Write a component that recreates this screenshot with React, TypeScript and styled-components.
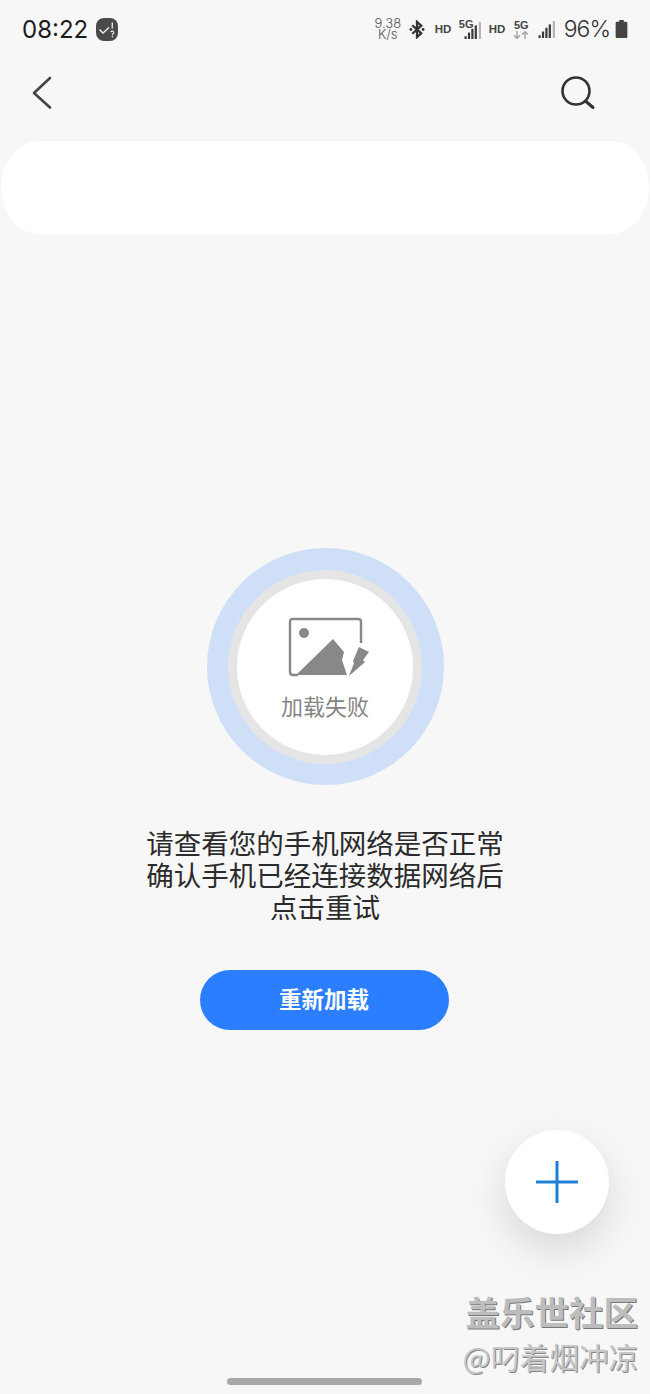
import React from 'react';
import styled, { createGlobalStyle } from 'styled-components';

const CJK = `"Noto Sans CJK SC", "Noto Sans", sans-serif`;

const Signal: React.FC<{ width: number; height: number }> = ({ width, height }) => {
  const heights = [0.16, 0.38, 0.6, 0.8];
  return (
    <svg width={width} height={height} viewBox="0 0 20 20">
      {heights.map((h, i) => (
        <rect key={i} x={i * 4} y={20 - h * 20} width="2.6" height={h * 20} fill="#3a3a3a" />
      ))}
      <rect x="16.8" y="0" width="2.6" height="20" fill="#b5b5b5" />
    </svg>
  );
};

const App: React.FC = () => {
  return (
    <Page>
      <GlobalStyle />
      <StatusBar>
        <StatusLeft>
          <Time>08:22</Time>
          <Badge>
            <svg width="22" height="23" viewBox="0 0 22 23">
              <path d="M3.5 11.5 L7 15 L13 9.5" fill="none" stroke="#f0f0f0" strokeWidth="1.4" />
              <rect x="15.6" y="4.5" width="1.3" height="6" fill="#f0f0f0" />
              <path d="M14.6 14.2 C15 12.6 18 12.8 17.8 14.6 C17.7 15.8 16.3 15.8 16.3 17.2" fill="none" stroke="#f0f0f0" strokeWidth="1.1" />
              <rect x="15.7" y="18" width="1.2" height="1.4" fill="#f0f0f0" />
            </svg>
          </Badge>
        </StatusLeft>
        <StatusRight>
          <Speed>
            <span>9.38</span>
            <span>K/s</span>
          </Speed>
          <Slot $gap={7}>
            <svg width="16" height="19" viewBox="0 0 16 20">
              <path d="M3 5.5 L12.5 14 L8 18 V2 L12.5 6 L3 14.5" fill="none" stroke="#333" strokeWidth="2.4" />
              <circle cx="1.6" cy="10" r="1.5" fill="#333" />
              <circle cx="14.4" cy="10" r="1.5" fill="#333" />
            </svg>
          </Slot>
          <Slot $gap={10}>
            <Hd>HD</Hd>
          </Slot>
          <Slot $gap={8}>
            <NetworkTag>
              <FiveG>5G</FiveG>
              <Signal width={18} height={17} />
            </NetworkTag>
          </Slot>
          <Slot $gap={7}>
            <Hd>HD</Hd>
          </Slot>
          <Slot $gap={9}>
            <DataTag>
              <FiveG>5G</FiveG>
              <svg width="16" height="8" viewBox="0 0 16 8">
                <path d="M4 0 V7 M1 4.4 L4 7.4 L7 4.4" fill="none" stroke="#aaa" strokeWidth="1.5" />
                <path d="M12 8 V1 M9 3.6 L12 0.6 L15 3.6" fill="none" stroke="#aaa" strokeWidth="1.5" />
              </svg>
            </DataTag>
          </Slot>
          <Slot $gap={9}>
            <Signal width={18} height={17} />
          </Slot>
          <Slot $gap={8}>
            <Percent>96%</Percent>
          </Slot>
          <Slot $gap={5}>
            <svg width="13" height="18" viewBox="0 0 13 20">
              <path d="M4 0 H9 V2 H11.5 Q13 2 13 3.5 V18.5 Q13 20 11.5 20 H1.5 Q0 20 0 18.5 V3.5 Q0 2 1.5 2 H4 Z" fill="#444" />
            </svg>
          </Slot>
        </StatusRight>
      </StatusBar>

      <NavBar>
        <svg width="22" height="34" viewBox="0 0 22 34">
          <path d="M19 2 L3 17 L19 31.5" fill="none" stroke="#444" strokeWidth="2.6" strokeLinecap="round" strokeLinejoin="round" />
        </svg>
        <svg width="36" height="34" viewBox="0 0 36 34">
          <circle cx="16" cy="15" r="13.5" fill="none" stroke="#333" strokeWidth="2.6" />
          <path d="M25.5 25 L33 31.5" stroke="#333" strokeWidth="3" strokeLinecap="round" />
        </svg>
      </NavBar>

      <SearchCard />

      <ErrorSection>
        <OuterRing>
          <MiddleRing>
            <InnerCircle>
              <svg width="84" height="62" viewBox="0 0 84 62">
                <path d="M73 26 V5 Q73 2 70 2 H5 Q2 2 2 5 V55 Q2 58 5 58 H10" fill="none" stroke="#89878a" strokeWidth="2.4" />
                <circle cx="16" cy="16" r="5" fill="#89878a" />
                <path d="M8 58 L45 22 L56 35 L54 43 L59 58 Z" fill="#89878a" />
                <path d="M71 30 L81 35 L75 43 L77 45 L61 59 L66 46 L65 44 Z" fill="#89878a" />
              </svg>
              <FailedLabel>加载失败</FailedLabel>
            </InnerCircle>
          </MiddleRing>
        </OuterRing>
        <Message>
          请查看您的手机网络是否正常
          <br />
          确认手机已经连接数据网络后
          <br />
          点击重试
        </Message>
        <ReloadButton>重新加载</ReloadButton>
      </ErrorSection>

      <Fab>
        <svg width="42" height="42" viewBox="0 0 42 42">
          <path d="M1 21 H41 M21 1 V41" stroke="#1f7ed6" strokeWidth="3" strokeLinecap="round" />
        </svg>
      </Fab>

      <Watermark>
        <WatermarkTitle>盖乐世社区</WatermarkTitle>
        <WatermarkUser>@叼着烟冲凉</WatermarkUser>
      </Watermark>

      <HomeIndicator />
    </Page>
  );
};

export default App;

const GlobalStyle = createGlobalStyle`
  html, body {
    margin: 0;
    padding: 0;
    background: #f7f7f7;
  }
`;

const Page = styled.div`
  position: relative;
  width: 650px;
  height: 1394px;
  overflow: hidden;
  background: #f7f7f7;
  display: flex;
  flex-direction: column;
  font-family: ${CJK};
`;

const StatusBar = styled.div`
  height: 58px;
  padding: 0 22px;
  box-sizing: border-box;
  display: flex;
  align-items: center;
  justify-content: space-between;
`;

const StatusLeft = styled.div`
  display: flex;
  align-items: center;
  gap: 8px;
`;

const Time = styled.span`
  font-family: Inter, sans-serif;
  font-size: 24px;
  font-weight: 400;
  color: #1c1c1c;
`;

const Badge = styled.div`
  width: 22px;
  height: 23px;
  border-radius: 8px;
  background: #4a4a4a;
  display: flex;
`;

const StatusRight = styled.div`
  display: flex;
  align-items: center;
`;

const Slot = styled.div<{ $gap: number }>`
  display: flex;
  align-items: center;
  margin-left: ${(p) => p.$gap}px;
`;

const Speed = styled.div`
  width: 28px;
  display: flex;
  flex-direction: column;
  align-items: center;
  font-family: Inter, sans-serif;
  font-size: 13px;
  line-height: 11px;
  font-weight: 300;
  color: #555;
`;

const Hd = styled.span`
  width: 16px;
  font-family: "Liberation Sans", sans-serif;
  font-size: 11.5px;
  font-weight: 700;
  color: #444;
`;

const FiveG = styled.span`
  font-family: "Liberation Sans", sans-serif;
  font-size: 11px;
  line-height: 10px;
  font-weight: 700;
  color: #444;
`;

const NetworkTag = styled.div`
  position: relative;
  width: 23px;
  height: 20px;
  display: flex;
  align-items: flex-start;

  svg {
    position: absolute;
    right: 0;
    bottom: 0;
  }
`;

const DataTag = styled.div`
  width: 15px;
  display: flex;
  flex-direction: column;
  align-items: center;
  gap: 1px;
`;

const Percent = styled.span`
  font-family: Inter, sans-serif;
  font-size: 23px;
  font-weight: 300;
  letter-spacing: -1px;
  color: #333;
`;

const NavBar = styled.div`
  height: 70px;
  padding: 0 54px 0 31px;
  box-sizing: border-box;
  display: flex;
  align-items: center;
  justify-content: space-between;
`;

const SearchCard = styled.div`
  height: 93px;
  margin: 13px 1px 0;
  background: #fff;
  border-radius: 38px / 46px;
`;

const ErrorSection = styled.div`
  margin-top: 314px;
  display: flex;
  flex-direction: column;
  align-items: center;
`;

const OuterRing = styled.div`
  width: 237px;
  height: 237px;
  border-radius: 50%;
  background: #cfdff8;
  display: flex;
  align-items: center;
  justify-content: center;
`;

const MiddleRing = styled.div`
  width: 194px;
  height: 194px;
  border-radius: 50%;
  background: #e5e5e5;
  display: flex;
  align-items: center;
  justify-content: center;
`;

const InnerCircle = styled.div`
  width: 176px;
  height: 176px;
  border-radius: 50%;
  background: #fff;
  display: flex;
  flex-direction: column;
  align-items: center;
  padding: 38px 0 0 10px;
  box-sizing: border-box;
`;

const FailedLabel = styled.div`
  margin: 10px 0 0 -10px;
  font-size: 22px;
  line-height: 32px;
  color: #858585;
`;

const Message = styled.div`
  margin-top: 41px;
  font-size: 27.5px;
  line-height: 32px;
  text-align: center;
  color: #2b2b2b;
`;

const ReloadButton = styled.button`
  margin: 48px 1px 0 0;
  width: 249px;
  height: 60px;
  border: none;
  border-radius: 30px;
  background: #2a7eff;
  color: #fff;
  font-family: ${CJK};
  font-size: 22.5px;
  font-weight: 700;
  padding: 0 1px 5px 0;
`;

const Fab = styled.div`
  position: absolute;
  left: 505px;
  top: 1130px;
  width: 104px;
  height: 104px;
  border-radius: 50%;
  background: #fff;
  box-shadow: 0 16px 40px rgba(0, 0, 0, 0.13);
  display: flex;
  align-items: center;
  justify-content: center;
`;

const Watermark = styled.div`
  position: absolute;
  right: 12px;
  top: 1288px;
  display: flex;
  flex-direction: column;
  align-items: flex-end;
`;

const WatermarkTitle = styled.div`
  font-size: 34.5px;
  line-height: 46px;
  font-weight: 700;
  color: #bdbdbd;
  text-shadow: 1px 1px 0 #777;
`;

const WatermarkUser = styled.div`
  font-size: 29.5px;
  line-height: 44px;
  color: #c8c8c8;
  text-shadow: 1px 1px 0 #888;
`;

const HomeIndicator = styled.div`
  position: absolute;
  left: 227px;
  top: 1378px;
  width: 195px;
  height: 7px;
  border-radius: 4px;
  background: #a8a8a8;
`;
